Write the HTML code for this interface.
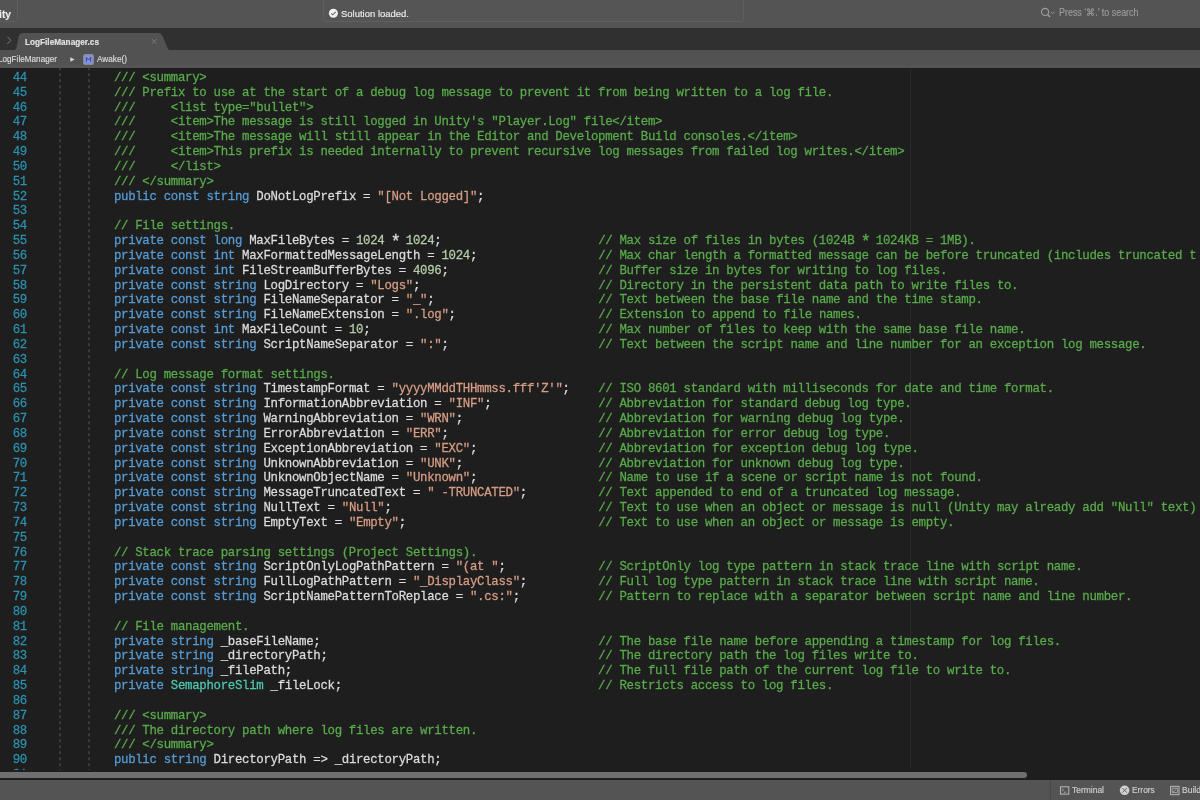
<!DOCTYPE html>
<html><head><meta charset="utf-8">
<style>
*{margin:0;padding:0;box-sizing:border-box}
html,body{width:1200px;height:800px;overflow:hidden;background:#1e1e1e}
body{position:relative;font-family:"Liberation Sans",sans-serif}
.abs{position:absolute}
#toolbar{position:absolute;left:0;top:0;width:1200px;height:28px;background:#545454}
#strip{position:absolute;left:0;top:28px;width:1200px;height:21.5px;background:#303030}
#crumb{position:absolute;left:0;top:49.5px;width:1200px;height:18.5px;background:#525252}
#editor{position:absolute;left:0;top:68px;width:1200px;height:712px;background:#1e1e1e;overflow:hidden}
#status{position:absolute;left:0;top:780px;width:1200px;height:20px;background:#545454}
.ln,.nm{position:absolute;height:14.833px;line-height:14.833px;white-space:pre;font-family:"Liberation Mono",monospace;font-size:12.4px;letter-spacing:-0.315px;transform:translateY(2.5px) scaleY(1.1);-webkit-text-stroke:0.25px}
.ln{left:113.9px}
.nm{left:0;width:27px;text-align:right;color:#2b91af}
.c{color:#59ab4b}.k{color:#569cd6}.i{color:#dcdcdc}.s{color:#d69d85}.n{color:#b5cea8}.t{color:#4ec9b0}
.ast{display:inline-block;transform:translateY(2.2px) scale(1.35);}
.ui{line-height:1;white-space:nowrap;-webkit-text-stroke:0.15px}
.guide{position:absolute;top:68px;width:2px;height:704px;background:repeating-linear-gradient(to bottom,#3a3a3a 0 3px,transparent 3px 6px);background-position:0 -0.8px}
</style></head><body><div id="root" style="position:absolute;left:0;top:0;width:1200px;height:800px;will-change:transform;overflow:hidden">
<div id="toolbar">
  <div class="abs" style="left:-40px;top:-2px;width:57.8px;height:23.5px;border:1px solid #5e5e5e;border-radius:1.5px"></div>
  <div class="abs ui" style="right:1189.00px;top:9.87px;font-size:10.2px;color:#ececec;font-weight:bold;transform-origin:100% 0">ity</div>
  <div class="abs" style="left:323px;top:-3px;width:421px;height:24.5px;border:1px solid #5f5f5f;border-radius:3px;background:#555"></div>
  <svg class="abs" style="left:328px;top:8px" width="11" height="11" viewBox="0 0 11 11"><circle cx="5.4" cy="5.2" r="4.5" fill="#f2f2f2"/><path d="M3.2 5.3 L4.8 6.8 L7.7 3.8" stroke="#6a6a6a" stroke-width="1.1" fill="none"/></svg>
  <div class="abs ui" style="left:341.00px;top:9.20px;font-size:9.8px;color:#ececec;font-weight:normal;transform:scaleX(0.9673);transform-origin:0 0;">Solution loaded.</div>
  <svg class="abs" style="left:1039px;top:6px" width="17" height="13" viewBox="0 0 17 13"><circle cx="6.05" cy="5.9" r="3.55" stroke="#a0a0a0" stroke-width="1.15" fill="none"/><path d="M8.6 8.5 L11 11" stroke="#a0a0a0" stroke-width="1.4"/><path d="M11.8 6.1 L13.6 7.6 L15.4 6.1" stroke="#9a9a9a" stroke-width="1" fill="none"/></svg>
  <div class="abs ui" style="left:1059.40px;top:8.04px;font-size:10px;color:#9c9c9c;font-weight:normal;transform:scaleX(0.8922);transform-origin:0 0;">Press ‘⌘.’ to search</div>
</div>
<div id="strip"></div>


<div id="crumb"></div>
<svg class="abs" style="left:0;top:28px" width="200" height="23" viewBox="0 0 200 23">
  <path d="M12 22.5 Q16 22.5 16.8 18 L18.6 8.5 Q19.5 5 23 5 H157.5 Q161.5 5 163 9 L167.3 19.5 Q168.3 22.5 171 22.5 Z" fill="#525252"/>
  <path d="M7.4 8.8 L10.9 12.3 L7.4 15.8" stroke="#8a8a8a" stroke-width="0.9" fill="none"/>
  <path d="M151.8 11 L156.6 15.8 M156.6 11 L151.8 15.8" stroke="#7c7c7c" stroke-width="1"/>
</svg>
<div class="abs ui" style="left:24.90px;top:37.75px;font-size:8.8px;color:#e2e2e2;font-weight:bold;transform:scaleX(0.9340);transform-origin:0 0;">LogFileManager.cs</div>
<div class="abs" style="left:0;top:66.3px;width:1200px;height:1px;background:#575757"></div>
<div class="abs ui" style="left:-2.00px;top:54.68px;font-size:9px;color:#dedede;font-weight:normal;transform:scaleX(0.9071);transform-origin:0 0;">LogFileManager</div>
<svg class="abs" style="left:69px;top:56px" width="7" height="7" viewBox="0 0 7 7"><path d="M1.3 1.3 L5.6 3.5 L1.3 5.7 Z" fill="#d8d8d8"/></svg>
<svg class="abs" style="left:83px;top:54px" width="11" height="11" viewBox="0 0 11 11"><rect x="0.6" y="0.6" width="9.8" height="9.8" rx="1.5" fill="#8191e6" stroke="#8c8c8c" stroke-width="1.1"/><path d="M3.4 7.8 V3.4 L5.5 6 L7.6 3.4 V7.8" stroke="#3a4684" stroke-width="0.9" fill="none"/></svg>
<div class="abs ui" style="left:96.80px;top:54.68px;font-size:9px;color:#dedede;font-weight:normal;transform:scaleX(0.9132);transform-origin:0 0;">Awake()</div>
<div id="editor"></div>
<div class="abs" style="left:910px;top:68px;width:1px;height:700px;background:#292929"></div>
<div class="guide" style="left:59px"></div>
<div class="guide" style="left:87.8px"></div>
<div class="nm" style="top:68.000px">44</div>
<div class="nm" style="top:82.833px">45</div>
<div class="nm" style="top:97.666px">46</div>
<div class="nm" style="top:112.499px">47</div>
<div class="nm" style="top:127.332px">48</div>
<div class="nm" style="top:142.165px">49</div>
<div class="nm" style="top:156.998px">50</div>
<div class="nm" style="top:171.831px">51</div>
<div class="nm" style="top:186.664px">52</div>
<div class="nm" style="top:201.497px">53</div>
<div class="nm" style="top:216.330px">54</div>
<div class="nm" style="top:231.163px">55</div>
<div class="nm" style="top:245.996px">56</div>
<div class="nm" style="top:260.829px">57</div>
<div class="nm" style="top:275.662px">58</div>
<div class="nm" style="top:290.495px">59</div>
<div class="nm" style="top:305.328px">60</div>
<div class="nm" style="top:320.161px">61</div>
<div class="nm" style="top:334.994px">62</div>
<div class="nm" style="top:349.827px">63</div>
<div class="nm" style="top:364.660px">64</div>
<div class="nm" style="top:379.493px">65</div>
<div class="nm" style="top:394.326px">66</div>
<div class="nm" style="top:409.159px">67</div>
<div class="nm" style="top:423.992px">68</div>
<div class="nm" style="top:438.825px">69</div>
<div class="nm" style="top:453.658px">70</div>
<div class="nm" style="top:468.491px">71</div>
<div class="nm" style="top:483.324px">72</div>
<div class="nm" style="top:498.157px">73</div>
<div class="nm" style="top:512.990px">74</div>
<div class="nm" style="top:527.823px">75</div>
<div class="nm" style="top:542.656px">76</div>
<div class="nm" style="top:557.489px">77</div>
<div class="nm" style="top:572.322px">78</div>
<div class="nm" style="top:587.155px">79</div>
<div class="nm" style="top:601.988px">80</div>
<div class="nm" style="top:616.821px">81</div>
<div class="nm" style="top:631.654px">82</div>
<div class="nm" style="top:646.487px">83</div>
<div class="nm" style="top:661.320px">84</div>
<div class="nm" style="top:676.153px">85</div>
<div class="nm" style="top:690.986px">86</div>
<div class="nm" style="top:705.819px">87</div>
<div class="nm" style="top:720.652px">88</div>
<div class="nm" style="top:735.485px">89</div>
<div class="nm" style="top:750.318px">90</div>
<div class="nm" style="top:765.151px">91</div>
<div class="ln" style="top:68.000px"><span class="c">/// &lt;summary&gt;</span></div>
<div class="ln" style="top:82.833px"><span class="c">/// Prefix to use at the start of a debug log message to prevent it from being written to a log file.</span></div>
<div class="ln" style="top:97.666px"><span class="c">///     &lt;list type="bullet"&gt;</span></div>
<div class="ln" style="top:112.499px"><span class="c">///     &lt;item&gt;The message is still logged in Unity's "Player.Log" file&lt;/item&gt;</span></div>
<div class="ln" style="top:127.332px"><span class="c">///     &lt;item&gt;The message will still appear in the Editor and Development Build consoles.&lt;/item&gt;</span></div>
<div class="ln" style="top:142.165px"><span class="c">///     &lt;item&gt;This prefix is needed internally to prevent recursive log messages from failed log writes.&lt;/item&gt;</span></div>
<div class="ln" style="top:156.998px"><span class="c">///     &lt;/list&gt;</span></div>
<div class="ln" style="top:171.831px"><span class="c">/// &lt;/summary&gt;</span></div>
<div class="ln" style="top:186.664px"><span class="k">public const string</span><span class="i"> DoNotLogPrefix = </span><span class="s">"[Not Logged]"</span><span class="i">;</span></div>
<div class="ln" style="top:201.497px"></div>
<div class="ln" style="top:216.330px"><span class="c">// File settings.</span></div>
<div class="ln" style="top:231.163px"><span class="k">private const long</span><span class="i"> MaxFileBytes = </span><span class="n">1024</span><span class="i"> <span class="ast">*</span> </span><span class="n">1024</span><span class="i">;</span><span class="i">                      </span><span class="c">// Max size of files in bytes (1024B <span class="ast">*</span> 1024KB = 1MB).</span></div>
<div class="ln" style="top:245.996px"><span class="k">private const int</span><span class="i"> MaxFormattedMessageLength = </span><span class="n">1024</span><span class="i">;</span><span class="i">                 </span><span class="c">// Max char length a formatted message can be before truncated (includes truncated text).</span></div>
<div class="ln" style="top:260.829px"><span class="k">private const int</span><span class="i"> FileStreamBufferBytes = </span><span class="n">4096</span><span class="i">;</span><span class="i">                     </span><span class="c">// Buffer size in bytes for writing to log files.</span></div>
<div class="ln" style="top:275.662px"><span class="k">private const string</span><span class="i"> LogDirectory = </span><span class="s">"Logs"</span><span class="i">;</span><span class="i">                         </span><span class="c">// Directory in the persistent data path to write files to.</span></div>
<div class="ln" style="top:290.495px"><span class="k">private const string</span><span class="i"> FileNameSeparator = </span><span class="s">"_"</span><span class="i">;</span><span class="i">                       </span><span class="c">// Text between the base file name and the time stamp.</span></div>
<div class="ln" style="top:305.328px"><span class="k">private const string</span><span class="i"> FileNameExtension = </span><span class="s">".log"</span><span class="i">;</span><span class="i">                    </span><span class="c">// Extension to append to file names.</span></div>
<div class="ln" style="top:320.161px"><span class="k">private const int</span><span class="i"> MaxFileCount = </span><span class="n">10</span><span class="i">;</span><span class="i">                                </span><span class="c">// Max number of files to keep with the same base file name.</span></div>
<div class="ln" style="top:334.994px"><span class="k">private const string</span><span class="i"> ScriptNameSeparator = </span><span class="s">":"</span><span class="i">;</span><span class="i">                     </span><span class="c">// Text between the script name and line number for an exception log message.</span></div>
<div class="ln" style="top:349.827px"></div>
<div class="ln" style="top:364.660px"><span class="c">// Log message format settings.</span></div>
<div class="ln" style="top:379.493px"><span class="k">private const string</span><span class="i"> TimestampFormat = </span><span class="s">"yyyyMMddTHHmmss.fff'Z'"</span><span class="i">;</span><span class="i">    </span><span class="c">// ISO 8601 standard with milliseconds for date and time format.</span></div>
<div class="ln" style="top:394.326px"><span class="k">private const string</span><span class="i"> InformationAbbreviation = </span><span class="s">"INF"</span><span class="i">;</span><span class="i">               </span><span class="c">// Abbreviation for standard debug log type.</span></div>
<div class="ln" style="top:409.159px"><span class="k">private const string</span><span class="i"> WarningAbbreviation = </span><span class="s">"WRN"</span><span class="i">;</span><span class="i">                   </span><span class="c">// Abbreviation for warning debug log type.</span></div>
<div class="ln" style="top:423.992px"><span class="k">private const string</span><span class="i"> ErrorAbbreviation = </span><span class="s">"ERR"</span><span class="i">;</span><span class="i">                     </span><span class="c">// Abbreviation for error debug log type.</span></div>
<div class="ln" style="top:438.825px"><span class="k">private const string</span><span class="i"> ExceptionAbbreviation = </span><span class="s">"EXC"</span><span class="i">;</span><span class="i">                 </span><span class="c">// Abbreviation for exception debug log type.</span></div>
<div class="ln" style="top:453.658px"><span class="k">private const string</span><span class="i"> UnknownAbbreviation = </span><span class="s">"UNK"</span><span class="i">;</span><span class="i">                   </span><span class="c">// Abbreviation for unknown debug log type.</span></div>
<div class="ln" style="top:468.491px"><span class="k">private const string</span><span class="i"> UnknownObjectName = </span><span class="s">"Unknown"</span><span class="i">;</span><span class="i">                 </span><span class="c">// Name to use if a scene or script name is not found.</span></div>
<div class="ln" style="top:483.324px"><span class="k">private const string</span><span class="i"> MessageTruncatedText = </span><span class="s">" -TRUNCATED"</span><span class="i">;</span><span class="i">          </span><span class="c">// Text appended to end of a truncated log message.</span></div>
<div class="ln" style="top:498.157px"><span class="k">private const string</span><span class="i"> NullText = </span><span class="s">"Null"</span><span class="i">;</span><span class="i">                             </span><span class="c">// Text to use when an object or message is null (Unity may already add "Null" text).</span></div>
<div class="ln" style="top:512.990px"><span class="k">private const string</span><span class="i"> EmptyText = </span><span class="s">"Empty"</span><span class="i">;</span><span class="i">                           </span><span class="c">// Text to use when an object or message is empty.</span></div>
<div class="ln" style="top:527.823px"></div>
<div class="ln" style="top:542.656px"><span class="c">// Stack trace parsing settings (Project Settings).</span></div>
<div class="ln" style="top:557.489px"><span class="k">private const string</span><span class="i"> ScriptOnlyLogPathPattern = </span><span class="s">"(at "</span><span class="i">;</span><span class="i">             </span><span class="c">// ScriptOnly log type pattern in stack trace line with script name.</span></div>
<div class="ln" style="top:572.322px"><span class="k">private const string</span><span class="i"> FullLogPathPattern = </span><span class="s">"_DisplayClass"</span><span class="i">;</span><span class="i">          </span><span class="c">// Full log type pattern in stack trace line with script name.</span></div>
<div class="ln" style="top:587.155px"><span class="k">private const string</span><span class="i"> ScriptNamePatternToReplace = </span><span class="s">".cs:"</span><span class="i">;</span><span class="i">           </span><span class="c">// Pattern to replace with a separator between script name and line number.</span></div>
<div class="ln" style="top:601.988px"></div>
<div class="ln" style="top:616.821px"><span class="c">// File management.</span></div>
<div class="ln" style="top:631.654px"><span class="k">private string</span><span class="i"> _baseFileName;</span><span class="i">                                       </span><span class="c">// The base file name before appending a timestamp for log files.</span></div>
<div class="ln" style="top:646.487px"><span class="k">private string</span><span class="i"> _directoryPath;</span><span class="i">                                      </span><span class="c">// The directory path the log files write to.</span></div>
<div class="ln" style="top:661.320px"><span class="k">private string</span><span class="i"> _filePath;</span><span class="i">                                           </span><span class="c">// The full file path of the current log file to write to.</span></div>
<div class="ln" style="top:676.153px"><span class="k">private </span><span class="t">SemaphoreSlim</span><span class="i"> _fileLock;</span><span class="i">                                    </span><span class="c">// Restricts access to log files.</span></div>
<div class="ln" style="top:690.986px"></div>
<div class="ln" style="top:705.819px"><span class="c">/// &lt;summary&gt;</span></div>
<div class="ln" style="top:720.652px"><span class="c">/// The directory path where log files are written.</span></div>
<div class="ln" style="top:735.485px"><span class="c">/// &lt;/summary&gt;</span></div>
<div class="ln" style="top:750.318px"><span class="k">public string</span><span class="i"> DirectoryPath =&gt; _directoryPath;</span></div>
<div class="ln" style="top:765.151px"></div>
<div class="abs" style="left:1197px;top:68px;width:3px;height:712px;background:#1e1e1e"></div>
<div class="abs" style="left:0;top:770px;width:1200px;height:10px;background:#1e1e1e"></div>
<div class="abs" style="left:-10px;top:772px;width:1037px;height:6px;border-radius:3px;background:#6f6f6f"></div>
<div id="status">
  <div class="abs" style="left:1049.5px;top:0;width:1px;height:20px;background:#474747"></div>
  <svg class="abs" style="left:1059px;top:5px" width="11" height="11" viewBox="0 0 11 11"><rect x="1.5" y="1.8" width="8.3" height="7.3" fill="none" stroke="#c4c4c4" stroke-width="0.9"/><path d="M3.2 3.6 L4.4 4.9 L3.2 6.2 M4.8 7.2 H6.8" stroke="#c4c4c4" stroke-width="0.8" fill="none"/></svg>
  <div class="abs ui" style="left:1071.60px;top:6.12px;font-size:8.6px;color:#cfcfcf;font-weight:normal;transform:scaleX(0.9844);transform-origin:0 0;">Terminal</div>
  <svg class="abs" style="left:1119px;top:5px" width="12" height="12" viewBox="0 0 12 12"><circle cx="5.6" cy="5.3" r="4.8" fill="#d0d0d0"/><path d="M3.3 3 L7.9 7.6 M7.9 3 L3.3 7.6" stroke="#5a5a5a" stroke-width="0.9"/></svg>
  <div class="abs ui" style="left:1131.60px;top:6.12px;font-size:8.6px;color:#cfcfcf;font-weight:normal;transform:scaleX(0.9736);transform-origin:0 0;">Errors</div>
  <svg class="abs" style="left:1169px;top:5px" width="12" height="12" viewBox="0 0 12 12"><rect x="1.6" y="1.3" width="8.4" height="8.4" fill="none" stroke="#c4c4c4" stroke-width="0.9"/><path d="M3.2 3.2 H8.4 V7.6 H3.2 Z M4 7 L7.2 4.2" stroke="#c4c4c4" stroke-width="0.7" fill="none"/></svg>
  <div class="abs ui" style="left:1182.30px;top:6.12px;font-size:8.6px;color:#cfcfcf;font-weight:normal;transform:scaleX(0.9929);transform-origin:0 0;">Build</div>
</div>
</div></body></html>
